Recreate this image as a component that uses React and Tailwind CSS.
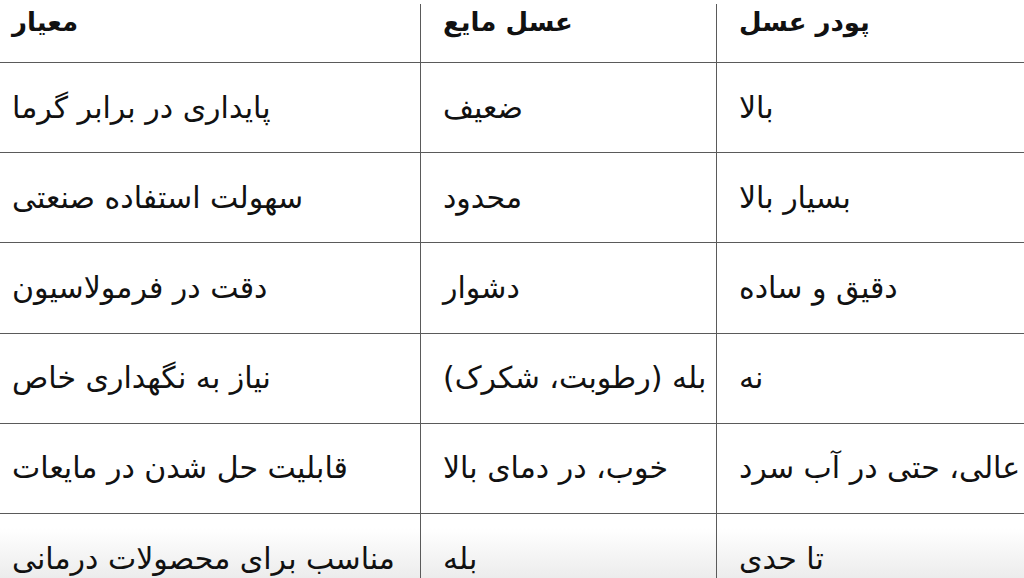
import React from "react";

const header = ["معیار", "عسل مایع", "پودر عسل"];
const rows = [
  ["پایداری در برابر گرما", "ضعیف", "بالا"],
  ["سهولت استفاده صنعتی", "محدود", "بسیار بالا"],
  ["دقت در فرمولاسیون", "دشوار", "دقیق و ساده"],
  ["نیاز به نگهداری خاص", "بله (رطوبت، شکرک)", "نه"],
  ["قابلیت حل شدن در مایعات", "خوب، در دمای بالا", "عالی، حتی در آب سرد"],
  ["مناسب برای محصولات درمانی", "بله", "تا حدی"],
];

function Cell({ children, col, header }) {
  const pad = col === 0 ? "pl-[12px]" : "pl-[22px]";
  const border = col < 2 ? "border-r border-[#5a5a5a]" : "";
  return (
    <div
      className={`${pad} ${border} flex ${header ? "items-start pt-[1px] text-[26px] font-bold" : "items-center text-[30px] font-normal"} min-w-0`}
    >
      <span dir="rtl" className="whitespace-nowrap">
        {children}
      </span>
    </div>
  );
}

export default function App() {
  return (
    <div
      className="w-[1024px] h-[578px] overflow-hidden bg-[linear-gradient(to_bottom,#ffffff_528px,#ececec_578px)] text-[#111] leading-[34px]"
      style={{ fontFamily: '"DejaVu Sans", "Noto Sans", sans-serif' }}
    >
      <div className="pt-[4px]">
        <div className="grid grid-cols-[421px_296px_1fr] h-[59px] border-b border-[#5a5a5a]">
          {header.map((h, i) => (
            <Cell key={i} col={i} header>
              {h}
            </Cell>
          ))}
        </div>
        {rows.map((r, ri) => (
          <div
            key={ri}
            className="grid grid-cols-[421px_296px_1fr] h-[90.2px] border-b border-[#5a5a5a]"
          >
            {r.map((c, ci) => (
              <Cell key={ci} col={ci}>
                {c}
              </Cell>
            ))}
          </div>
        ))}
      </div>
    </div>
  );
}
